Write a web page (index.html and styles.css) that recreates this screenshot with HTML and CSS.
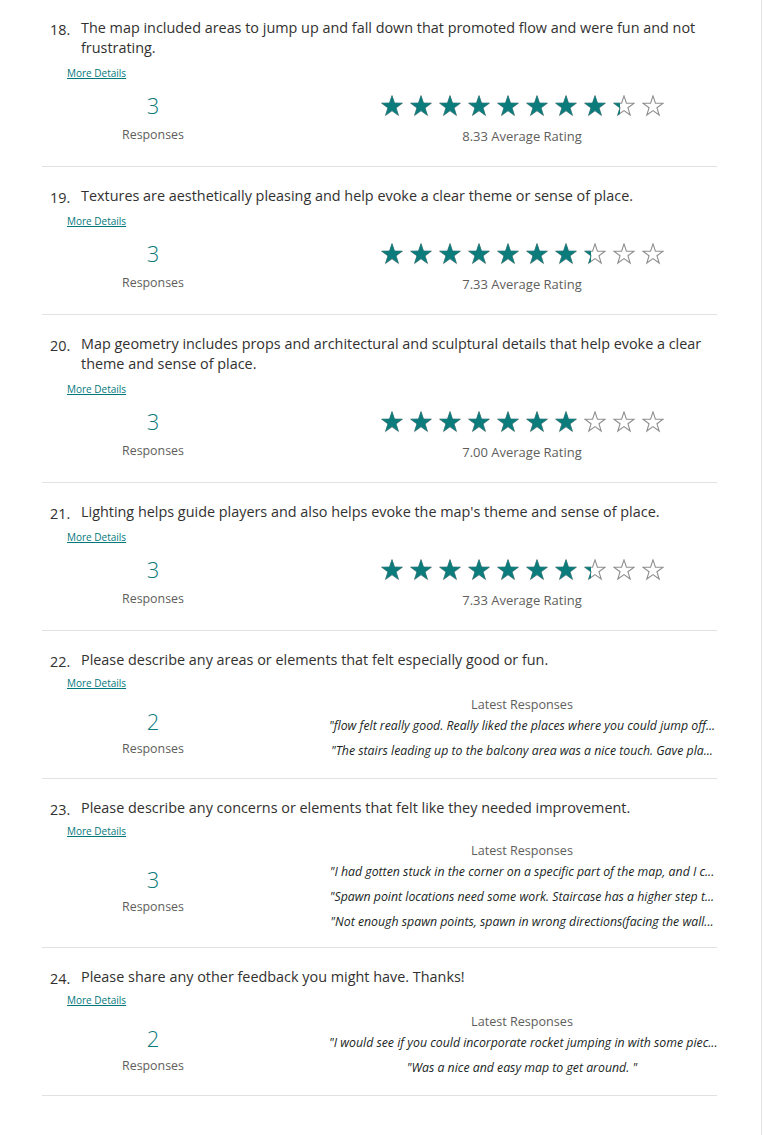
FILE: index.html
```html
<!DOCTYPE html>
<html lang="en">
<head>
<meta charset="utf-8">
<title>Survey results</title>
<link rel="stylesheet" href="styles.css">
</head>
<body>
<svg class="defs" width="0" height="0" aria-hidden="true">
  <defs>
    <path id="star" d="M12 1 L14.65 8.86 L22.94 8.95 L16.28 13.89 L18.76 21.8 L12 17 L5.24 21.8 L7.72 13.89 L1.06 8.95 L9.35 8.86 Z"/>
  </defs>
</svg>
<div class="page">
  <main class="results">

    <section class="q q-rating">
      <div class="q-title"><span class="q-num">18.</span><span class="q-text">The map included areas to jump up and fall down that promoted flow and were fun and not frustrating.</span></div>
      <a class="more" href="#">More Details</a>
      <div class="q-body">
        <div class="count"><div class="count-num">3</div><div class="count-label">Responses</div></div>
        <div class="rating">
          <div class="stars" data-value="8.33"></div>
          <div class="rating-label">8.33 Average Rating</div>
        </div>
      </div>
    </section>

    <section class="q q-rating">
      <div class="q-title"><span class="q-num">19.</span><span class="q-text">Textures are aesthetically pleasing and help evoke a clear theme or sense of place.</span></div>
      <a class="more" href="#">More Details</a>
      <div class="q-body">
        <div class="count"><div class="count-num">3</div><div class="count-label">Responses</div></div>
        <div class="rating">
          <div class="stars" data-value="7.33"></div>
          <div class="rating-label">7.33 Average Rating</div>
        </div>
      </div>
    </section>

    <section class="q q-rating">
      <div class="q-title"><span class="q-num">20.</span><span class="q-text">Map geometry includes props and architectural and sculptural details that help evoke a clear theme and sense of place.</span></div>
      <a class="more" href="#">More Details</a>
      <div class="q-body">
        <div class="count"><div class="count-num">3</div><div class="count-label">Responses</div></div>
        <div class="rating">
          <div class="stars" data-value="7.00"></div>
          <div class="rating-label">7.00 Average Rating</div>
        </div>
      </div>
    </section>

    <section class="q q-rating">
      <div class="q-title"><span class="q-num">21.</span><span class="q-text">Lighting helps guide players and also helps evoke the map's theme and sense of place.</span></div>
      <a class="more" href="#">More Details</a>
      <div class="q-body">
        <div class="count"><div class="count-num">3</div><div class="count-label">Responses</div></div>
        <div class="rating">
          <div class="stars" data-value="7.33"></div>
          <div class="rating-label">7.33 Average Rating</div>
        </div>
      </div>
    </section>

    <section class="q q-text-type">
      <div class="q-title"><span class="q-num">22.</span><span class="q-text">Please describe any areas or elements that felt especially good or fun.</span></div>
      <a class="more" href="#">More Details</a>
      <div class="q-body">
        <div class="count"><div class="count-num">2</div><div class="count-label">Responses</div></div>
        <div class="latest">
          <div class="latest-label">Latest Responses</div>
          <div class="resp">"flow felt really good. Really liked the places where you could jump off...</div>
          <div class="resp">"The stairs leading up to the balcony area was a nice touch. Gave pla...</div>
        </div>
      </div>
    </section>

    <section class="q q-text-type">
      <div class="q-title"><span class="q-num">23.</span><span class="q-text">Please describe any concerns or elements that felt like they needed improvement.</span></div>
      <a class="more" href="#">More Details</a>
      <div class="q-body">
        <div class="count"><div class="count-num">3</div><div class="count-label">Responses</div></div>
        <div class="latest">
          <div class="latest-label">Latest Responses</div>
          <div class="resp">"I had gotten stuck in the corner on a specific part of the map, and I c...</div>
          <div class="resp">"Spawn point locations need some work. Staircase has a higher step t...</div>
          <div class="resp">"Not enough spawn points, spawn in wrong directions(facing the wall...</div>
        </div>
      </div>
    </section>

    <section class="q q-text-type">
      <div class="q-title"><span class="q-num">24.</span><span class="q-text">Please share any other feedback you might have. Thanks!</span></div>
      <a class="more" href="#">More Details</a>
      <div class="q-body">
        <div class="count"><div class="count-num">2</div><div class="count-label">Responses</div></div>
        <div class="latest">
          <div class="latest-label">Latest Responses</div>
          <div class="resp">"I would see if you could incorporate rocket jumping in with some piec...</div>
          <div class="resp">"Was a nice and easy map to get around. "</div>
        </div>
      </div>
    </section>

  </main>
</div>
<script src="script.js"></script>
</body>
</html>
```

FILE: script.js
```js
document.querySelectorAll('.stars').forEach(function (el) {
  var v = parseFloat(el.getAttribute('data-value'));
  var html = '';
  for (var i = 0; i < 10; i++) {
    var f = Math.max(0, Math.min(1, v - i));
    html += '<span class="star">' +
      '<svg class="star-empty" viewBox="0 0 24 24"><use href="#star"/></svg>' +
      (f > 0 ? '<span class="star-fill" style="width:' + (f * 100).toFixed(1) + '%"><svg viewBox="0 0 24 24"><use href="#star"/></svg></span>' : '') +
      '</span>';
  }
  el.innerHTML = html;
});
```

FILE: styles.css
```css
html, body {
  margin: 0;
  padding: 0;
  background: #ffffff;
}

body {
  font-family: "Open Sans", "Noto Sans", sans-serif;
  color: #323130;
}

.defs {
  position: absolute;
  width: 0;
  height: 0;
}

.page {
  width: 762px;
  min-height: 1135px;
  border-right: 1px solid #e3e3e6;
  box-sizing: border-box;
  overflow: hidden;
}

.results {
  margin-left: 42px;
  margin-top: -1px;
  width: 675px;
}

.q {
  border-bottom: 1px solid #e1e1e1;
  padding: 19px 0 0;
}

.q-title {
  display: flex;
  padding-left: 8px;
  padding-right: 4px;
  font-size: 14.4px;
  line-height: 20px;
}

.q-num {
  flex: 0 0 31px;
  position: relative;
  top: 2px;
}

.q-text {
  flex: 1 1 auto;
}

.more {
  display: inline-block;
  margin: 8px 0 0 25px;
  font-size: 10px;
  line-height: 14px;
  color: #03787c;
  text-decoration: underline;
}

.q-text-type .more {
  margin-top: 6px;
}

.q-body {
  display: grid;
  grid-template-columns: 222px 386px;
  column-gap: 65px;
}

.q-rating .q-body {
  margin-top: 8px;
  padding-bottom: 21px;
  align-items: start;
}

.q-text-type .q-body {
  margin-top: 2px;
  min-height: 68px;
  padding-bottom: 16px;
  align-items: center;
}

.count {
  text-align: center;
}

.q-text-type .count {
  padding-top: 7px;
}

.count-num {
  font-size: 22px;
  line-height: 30px;
  font-weight: 300;
  color: #0b7b7b;
}

.count-label {
  margin-top: 6px;
  font-size: 12.4px;
  line-height: 18px;
  color: #605e5c;
}

.q-text-type .count-label {
  margin-top: 4px;
}

.rating {
  text-align: center;
  padding-top: 5px;
}

.stars {
  display: flex;
  justify-content: center;
  gap: 7px;
  height: 22px;
}

.star {
  position: relative;
  width: 22px;
  height: 22px;
  flex: 0 0 22px;
}

.star svg {
  display: block;
  width: 22px;
  height: 22px;
}

.star-empty {
  fill: #ffffff;
  stroke: #8f8f8f;
  stroke-width: 1.2;
}

.star-fill {
  position: absolute;
  left: 0;
  top: 0;
  height: 22px;
  overflow: hidden;
}

.star-fill svg {
  fill: #0b7b7b;
  stroke: #0b7b7b;
  stroke-width: 0.6;
}

.rating-label {
  margin-top: 10px;
  font-size: 13px;
  line-height: 18px;
  color: #605e5c;
}

.latest {
  text-align: center;
}

.latest-label {
  font-size: 12.6px;
  line-height: 18px;
  color: #605e5c;
}

.resp {
  margin-top: 7px;
  font-size: 12.3px;
  line-height: 18px;
  font-style: italic;
  color: #201f1e;
  white-space: nowrap;
}

.latest-label + .resp {
  margin-top: 3px;
}
```
